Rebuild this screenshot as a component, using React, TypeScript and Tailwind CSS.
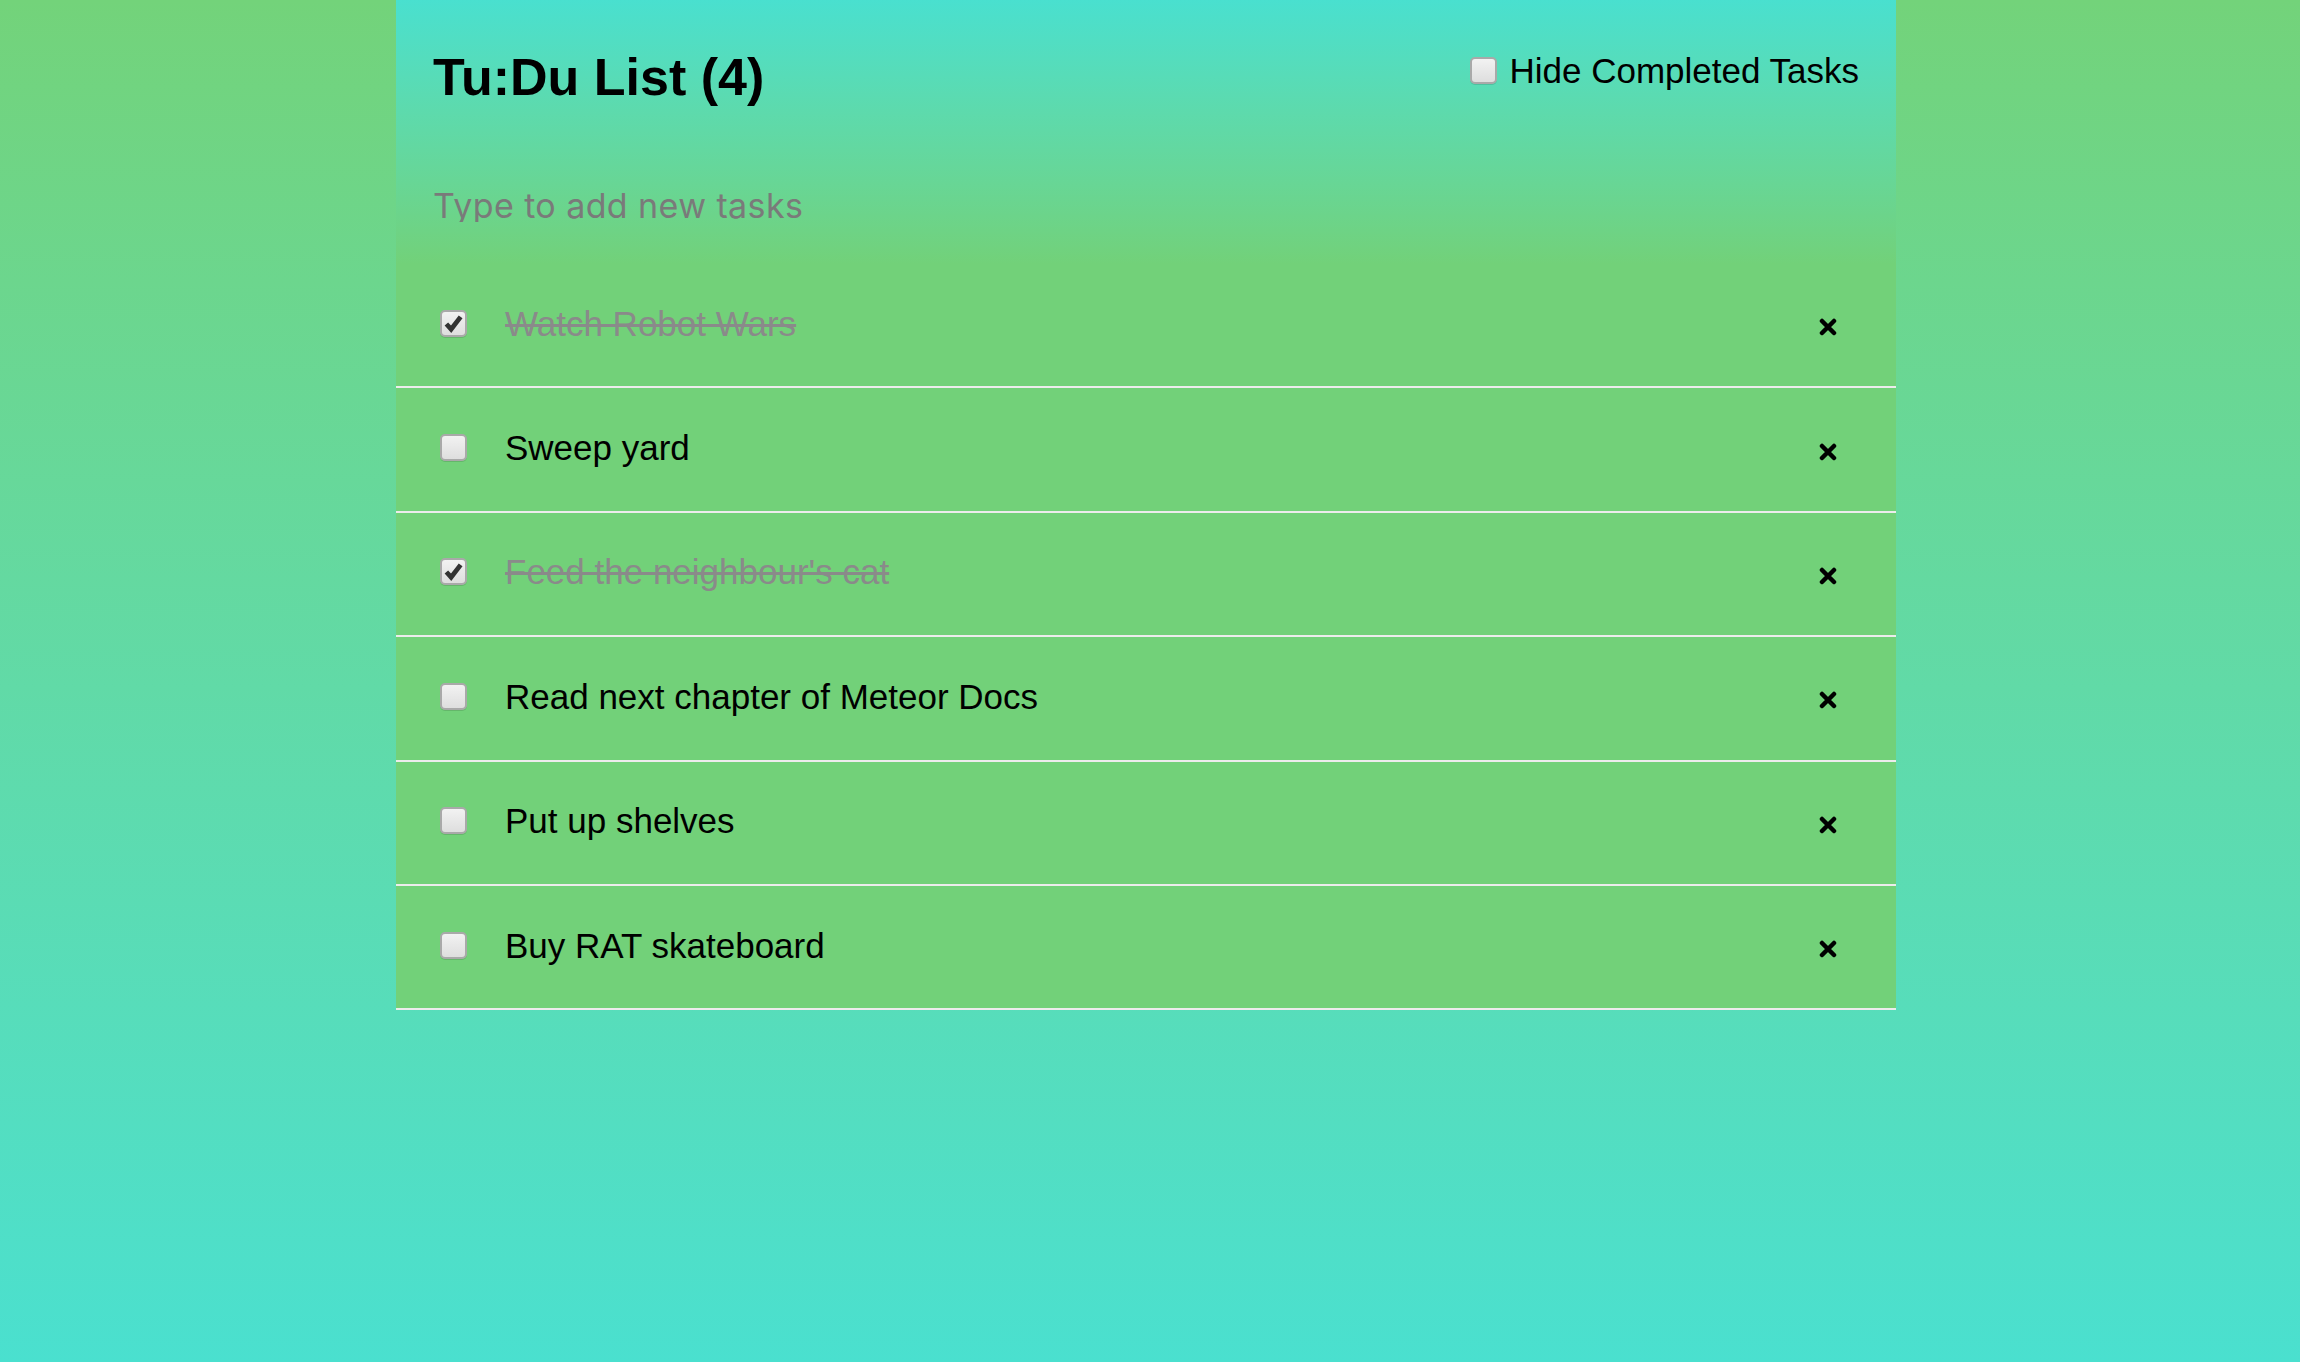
import { useState } from "react"

type Task = {
  id: number
  text: string
  checked: boolean
}

const initialTasks: Task[] = [
  { id: 1, text: "Watch Robot Wars", checked: true },
  { id: 2, text: "Sweep yard", checked: false },
  { id: 3, text: "Feed the neighbour's cat", checked: true },
  { id: 4, text: "Read next chapter of Meteor Docs", checked: false },
  { id: 5, text: "Put up shelves", checked: false },
  { id: 6, text: "Buy RAT skateboard", checked: false },
]

function Box({ checked, onClick }: { checked: boolean; onClick: () => void }) {
  return (
    <button
      type="button"
      onClick={onClick}
      className="flex h-[27px] w-[27px] shrink-0 items-center justify-center rounded-[5px] border-2 border-[#a9a9a9] bg-linear-to-b from-[#f2f2f2] to-[#dedede] shadow-[0_1px_0_rgba(0,0,0,0.12)]"
    >
      {checked && (
        <svg viewBox="0 0 20 20" className="h-[19px] w-[19px]">
          <path
            d="M2.5 10.5 L7.5 16 L17.5 3"
            fill="none"
            stroke="#333"
            strokeWidth="5"
            strokeLinejoin="miter"
          />
        </svg>
      )}
    </button>
  )
}

function Cross() {
  return (
    <svg viewBox="0 0 18 18" className="h-[18px] w-[18px]">
      <path d="M3 3 L15 15 M15 3 L3 15" stroke="#000" strokeWidth="4.5" strokeLinecap="round" />
    </svg>
  )
}

export default function App() {
  const [tasks, setTasks] = useState(initialTasks)
  const [hideCompleted, setHideCompleted] = useState(false)

  const remaining = tasks.filter((t) => !t.checked).length
  const shown = hideCompleted ? tasks.filter((t) => !t.checked) : tasks

  const toggle = (id: number) =>
    setTasks((ts) => ts.map((t) => (t.id === id ? { ...t, checked: !t.checked } : t)))

  return (
    <div className="flex min-h-screen justify-center bg-linear-to-b from-[#73d37a] to-[#4ae0cf] pr-[8px] font-['Liberation_Sans',Arial,sans-serif]">
      <div className="w-[1500px]">
        <header className="h-[264px] bg-linear-to-b from-[#49e0cf] to-[#72d179] px-[37px] pt-[51px]">
          <div className="flex items-start justify-between">
            <h1 className="text-[52px] leading-none font-bold text-black">
              Tu:Du List ({remaining})
            </h1>
            <label className="mt-[2px] flex items-center gap-[12px] text-[35px] leading-none text-black">
              <Box checked={hideCompleted} onClick={() => setHideCompleted(!hideCompleted)} />
              Hide Completed Tasks
            </label>
          </div>
          {/* new task input */}
          <input
            type="text"
            placeholder="Type to add new tasks"
            className="mt-[85px] block h-[34px] w-full bg-transparent p-0 font-['Inter',sans-serif] text-[34px] leading-[34px] tracking-[0.012em] outline-none placeholder:text-[#7a7a7a]"
          />
        </header>
        <ul>
          {shown.map((task) => (
            <li
              key={task.id}
              className="flex h-[124.4px] items-center border-b-2 border-[#ececec] bg-[#72d179] pr-[59px] pl-[44px]"
            >
              <div className="mb-[4px] flex items-center">
                <Box checked={task.checked} onClick={() => toggle(task.id)} />
              </div>
              <span
                className={
                  task.checked
                    ? "mb-[4px] ml-[38px] flex-1 text-[35px] leading-none text-[#8a8a8a] line-through"
                    : "mb-[4px] ml-[38px] flex-1 text-[35px] leading-none text-black"
                }
              >
                {task.text}
              </span>
              <button
                type="button"
                className="mt-[4px]"
                onClick={() => setTasks((ts) => ts.filter((t) => t.id !== task.id))}
              >
                <Cross />
              </button>
            </li>
          ))}
        </ul>
      </div>
    </div>
  )
}
